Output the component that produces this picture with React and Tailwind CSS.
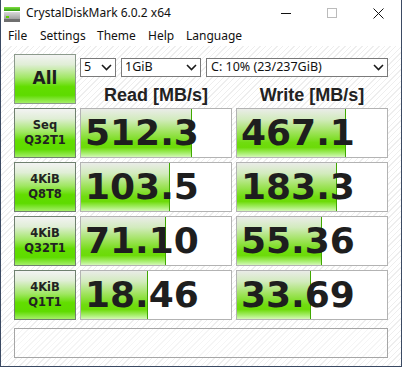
import React from 'react';

const rows = [
  { top: 'Seq', bottom: 'Q32T1', read: '512.3', readFill: 111, write: '467.1', writeFill: 109 },
  { top: '4KiB', bottom: 'Q8T8', read: '103.5', readFill: 89, write: '183.3', writeFill: 100 },
  { top: '4KiB', bottom: 'Q32T1', read: '71.10', readFill: 85, write: '55.36', writeFill: 85 },
  { top: '4KiB', bottom: 'Q1T1', read: '18.46', readFill: 67, write: '33.69', writeFill: 74 },
];

function AppIcon() {
  return (
    <svg width="16" height="15" viewBox="0 0 16 15">
      <defs>
        <linearGradient id="ig" x1="0" y1="0" x2="0" y2="1">
          <stop offset="0" stopColor="#7fe040" />
          <stop offset="1" stopColor="#2f9a10" />
        </linearGradient>
        <linearGradient id="ib" x1="0" y1="0" x2="0" y2="1">
          <stop offset="0" stopColor="#d8d8d8" />
          <stop offset="1" stopColor="#8a8a8a" />
        </linearGradient>
      </defs>
      <rect x="0" y="0" width="16" height="4" fill="url(#ig)" />
      <rect x="0" y="5" width="16" height="10" fill="url(#ib)" />
      <rect x="0" y="12" width="16" height="3" fill="#6f6f6f" />
      <rect x="2" y="9" width="3" height="2" fill="#5ed000" />
    </svg>
  );
}

function Chevron() {
  return (
    <svg width="11" height="7" viewBox="0 0 11 7" className="shrink-0">
      <path d="M1 1 L5.5 5.5 L10 1" fill="none" stroke="#1a1a1a" strokeWidth="1.6" />
    </svg>
  );
}

function Combo({ value, className }) {
  return (
    <div className={`h-[19px] border border-[#7a7a7a] bg-white flex items-center justify-between pl-[3px] pr-[3px] text-[12.5px] leading-none text-[#111] ${className}`}>
      <span>{value}</span>
      <Chevron />
    </div>
  );
}

function ValueBox({ value, fill }) {
  return (
    <div className="relative h-[50px] border border-[#b3b3b3] bg-white overflow-hidden">
      <div
        className="absolute left-0 top-0 bottom-0 border-r border-[#3fa800] bg-[linear-gradient(to_bottom,#eaece8_0%,#d2ebbd_22%,#9fe35c_48%,#70dc10_70%,#6cdb08_80%,#a6ee6c_92%,#d4f8b8_100%)]"
        style={{ width: fill }}
      />
      <div className="relative h-full flex items-center pl-[4px] font-['DejaVu_Sans',sans-serif] font-bold text-[36px] leading-none text-[#1e1e1e]">
        {value}
      </div>
    </div>
  );
}

export default function App() {
  return (
    <div className="w-[402px] h-[367px] bg-white border-x border-b border-[#3b4a63] flex flex-col font-['Noto_Sans',sans-serif] text-[#111] overflow-hidden">
      {/* title bar */}
      <div className="h-[26px] flex items-center shrink-0">
        <div className="ml-[3px] mt-[2px]">
          <AppIcon />
        </div>
        <span className="ml-[6px] text-[12px] leading-none">CrystalDiskMark 6.0.2 x64</span>
        <div className="ml-auto flex h-full">
          <div className="w-[46px] h-full flex items-center justify-center">
            <div className="w-[10px] h-px bg-[#111]" />
          </div>
          <div className="w-[46px] h-full flex items-center justify-center">
            <div className="w-[10px] h-[10px] border border-[#bbb]" />
          </div>
          <div className="w-[46px] h-full flex items-center justify-center">
            <svg width="11" height="11" viewBox="0 0 11 11">
              <path d="M0.5 0.5 L10.5 10.5 M10.5 0.5 L0.5 10.5" stroke="#111" strokeWidth="1" />
            </svg>
          </div>
        </div>
      </div>

      {/* menu */}
      <div className="h-[20px] flex items-center pl-[7px] text-[12px] leading-none shrink-0">
        <span className="w-[32px]">File</span>
        <span className="w-[57px]">Settings</span>
        <span className="w-[51px]">Theme</span>
        <span className="w-[38px]">Help</span>
        <span>Language</span>
      </div>

      {/* client */}
      <div className="flex-1 pl-[13px] pt-[8px] bg-[repeating-linear-gradient(135deg,#ffffff_0px,#ffffff_3px,#eeeeee_3px,#eeeeee_4px)]">
        <div className="grid grid-cols-[62px_152px_152px] gap-[4px]">
          <div className="h-[50px] border border-[#8b9a8b] bg-[linear-gradient(to_bottom,#f3f3f3_0%,#e0eed6_20%,#9fe761_48%,#62dd00_66%,#5edb00_84%,#a4ef68_100%)] flex items-center justify-center font-['DejaVu_Sans',sans-serif] font-bold text-[17px] text-[#1e1e1e]">
            All
          </div>
          <div className="col-span-2 h-[50px] flex flex-col">
            <div className="mt-[4px] flex">
              <Combo value="5" className="w-[36px]" />
              <Combo value="1GiB" className="w-[80px] ml-[5px]" />
              <Combo value="C: 10% (23/237GiB)" className="flex-1 ml-[5px] pl-[4px]" />
            </div>
            <div className="mt-[8px] grid grid-cols-2 gap-[4px] font-['Liberation_Sans',sans-serif] font-bold text-[18px] leading-[20px] text-[#222]">
              <div className="text-center">Read [MB/s]</div>
              <div className="text-center">Write [MB/s]</div>
            </div>
          </div>

          {rows.map((r, i) => (
            <React.Fragment key={i}>
              <div className="h-[50px] border border-[#6f806f] bg-[linear-gradient(to_bottom,#f3f3f3_0%,#e0eed6_20%,#9fe761_48%,#62dd00_66%,#5edb00_84%,#a4ef68_100%)] flex flex-col items-center justify-center font-['DejaVu_Sans',sans-serif] font-bold text-[11.5px] leading-[15px] text-[#222]">
                <span>{r.top}</span>
                <span>{r.bottom}</span>
              </div>
              <ValueBox value={r.read} fill={r.readFill} />
              <ValueBox value={r.write} fill={r.writeFill} />
            </React.Fragment>
          ))}

          <div className="col-span-3 mt-[4px] h-[30px] border border-[#a6a6a6] bg-white/40" />
        </div>
      </div>
    </div>
  );
}
